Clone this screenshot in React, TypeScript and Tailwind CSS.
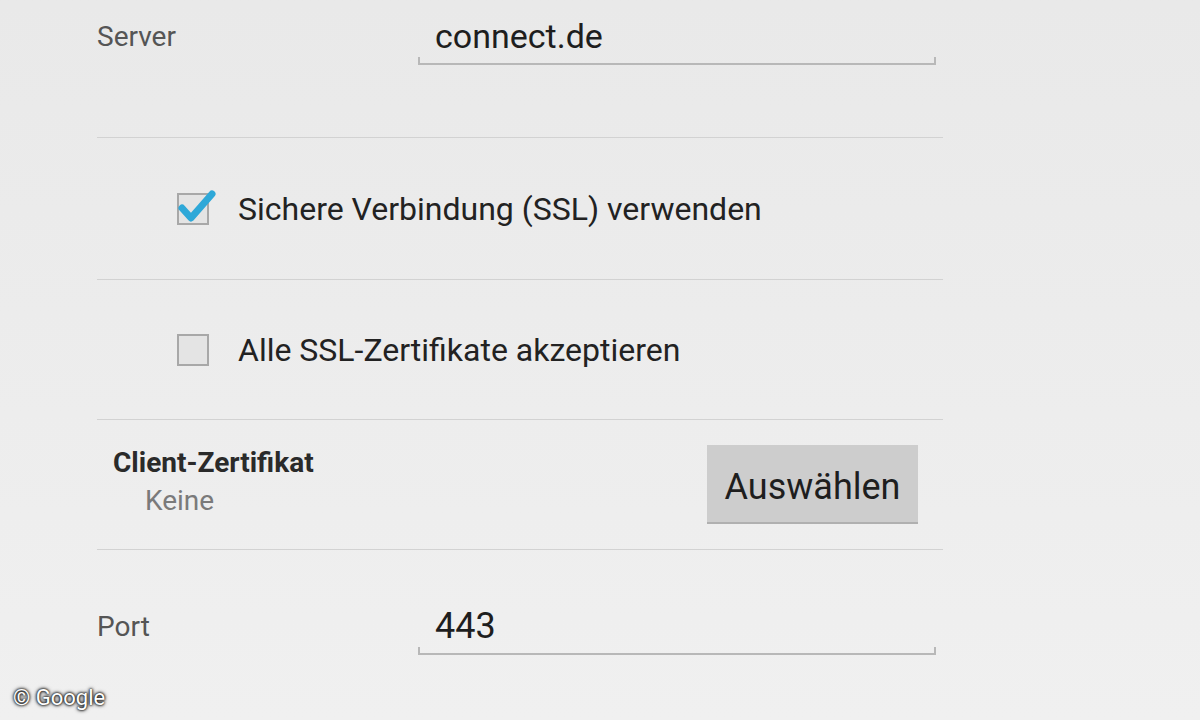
import React from "react";

function Underlined({ value, size }: { value: string; size: string }) {
  return (
    <div className="relative w-[518px] h-[47px] border-b-2 border-[#b8b8b8]">
      <span className="absolute left-0 bottom-0 w-[2px] h-[6px] bg-[#b8b8b8]" />
      <span className="absolute right-0 bottom-0 w-[2px] h-[6px] bg-[#b8b8b8]" />
      <div className={"pl-[17px] leading-[36px] text-[#1e1e1e] " + size}>{value}</div>
    </div>
  );
}

function Check({ checked }: { checked: boolean }) {
  return (
    <div className="relative w-[32px] h-[32px] border-2 border-[#a8a8a8] bg-[#e4e4e4] shrink-0">
      {checked && (
        <svg className="absolute -left-[2px] -top-[8px]" width="40" height="40" viewBox="0 0 40 40">
          <path d="M5 21 L14 31 L35 7" fill="none" stroke="#2ea8d8" strokeWidth="7" strokeLinecap="round" strokeLinejoin="round" />
        </svg>
      )}
    </div>
  );
}

export default function App() {
  return (
    <div
      className="relative w-[1200px] h-[720px] overflow-hidden bg-linear-to-b from-[#e9e9e9] to-[#f0f0f0]"
      style={{ fontFamily: "Roboto, 'Noto Sans', sans-serif" }}
    >
      <div className="ml-[97px] w-[846px] flex flex-col">
        <div className="h-[138px] border-b border-[#d2d2d2] flex items-start pt-[18px]">
          <div className="w-[321px] text-[28px] leading-[38px] text-[#555]">Server</div>
          <Underlined value="connect.de" size="text-[34px]" />
        </div>
        <div className="h-[142px] border-b border-[#d2d2d2] flex items-center pl-[80px] gap-[29px]">
          <Check checked />
          <div className="text-[32px] text-[#222]">Sichere Verbindung (SSL) verwenden</div>
        </div>
        <div className="h-[140px] border-b border-[#d2d2d2] flex items-center pl-[80px] gap-[29px]">
          <Check checked={false} />
          <div className="text-[32px] text-[#222]">Alle SSL-Zertifikate akzeptieren</div>
        </div>
        <div className="h-[130px] border-b border-[#d2d2d2] flex items-center justify-between pl-[16px] pr-[25px]">
          <div className="flex flex-col -mt-[4px]">
            <div className="text-[28px] leading-[36px] font-bold text-[#2a2a2a]">Client-Zertifikat</div>
            <div className="pl-[32px] text-[28px] leading-[40px] text-[#7a7a7a]">Keine</div>
          </div>
          <div className="w-[211px] h-[79px] bg-[#cdcdcd] border-b-2 border-[#b0b0b0] flex items-center justify-center text-[36px] text-[#1e1e1e] pt-[6px]">
            Auswählen
          </div>
        </div>
        <div className="flex items-start pt-[58px]">
          <div className="w-[321px] text-[28px] leading-[38px] text-[#555]">Port</div>
          <Underlined value="443" size="text-[36px]" />
        </div>
      </div>
      <div className="absolute left-[13px] bottom-[9px] text-[22px] leading-[26px] text-white [text-shadow:0_0_2px_#111,0_0_3px_#111,0_0_4px_#333]">
        © Google
      </div>
    </div>
  );
}
